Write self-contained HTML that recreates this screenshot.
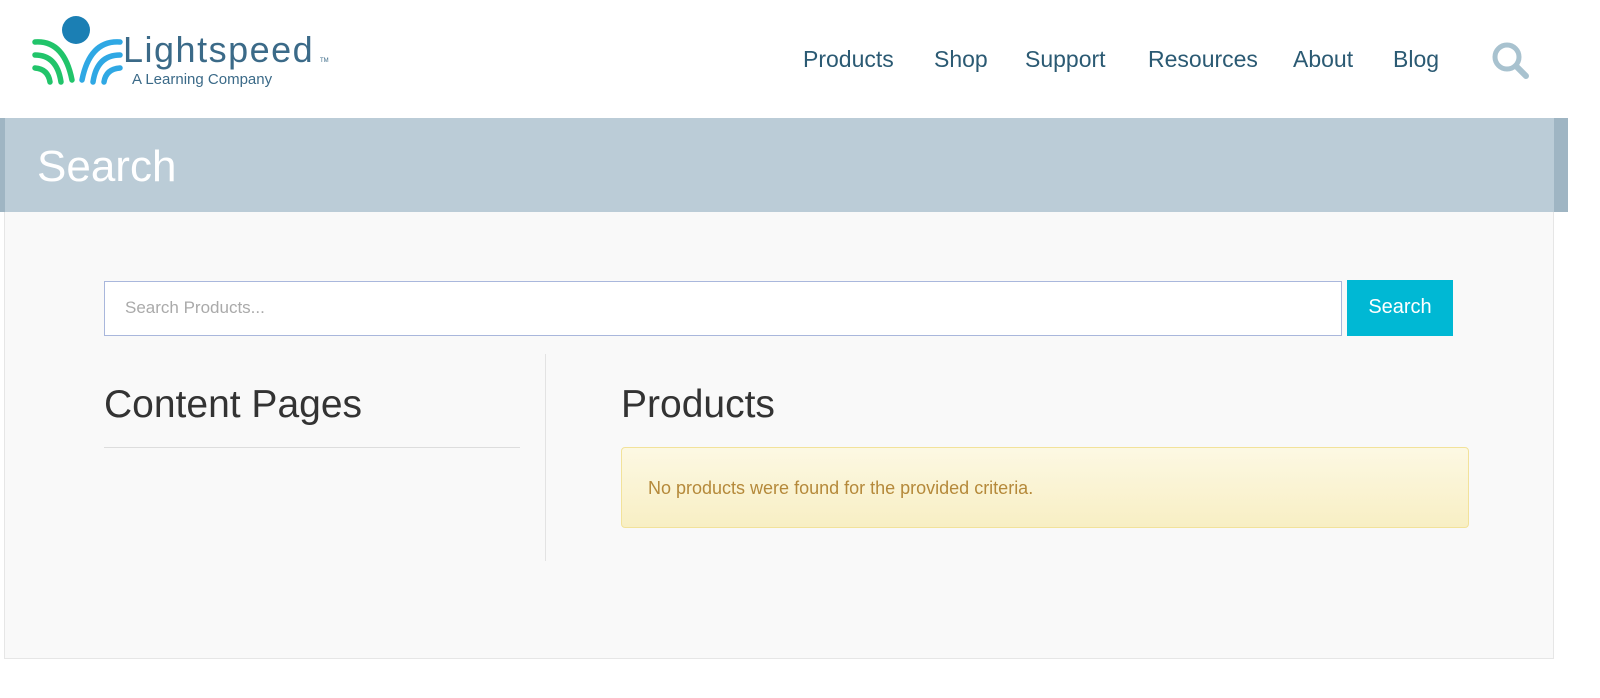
<!DOCTYPE html>
<html><head><meta charset="utf-8"><style>
*{margin:0;padding:0;box-sizing:border-box}
body{width:1600px;height:698px;background:#fff;font-family:"Liberation Sans",sans-serif;position:relative;overflow:hidden}
.a{position:absolute}
.nav{top:46px;font-size:23px;color:#2b5a73;white-space:nowrap}
</style></head><body>
<svg class="a" style="left:28px;top:12px" width="100" height="75" viewBox="0 0 100 75">
<circle cx="48" cy="18" r="14" fill="#1b7fb4"/>
<g fill="none" stroke-width="5.5" stroke-linecap="round">
<path d="M7 30 Q36 28 44 68" stroke="#21c46a"/>
<path d="M7 43 Q29 43 33 70" stroke="#21c46a"/>
<path d="M7 56 Q20 57 22 70" stroke="#21c46a"/>
<path d="M92 30 Q62 28 54 68" stroke="#2fa8e4"/>
<path d="M92 43 Q69 43 65 70" stroke="#2fa8e4"/>
<path d="M92 56 Q78 57 76 70" stroke="#2fa8e4"/>
</g></svg>
<div class="a" style="left:123px;top:29px;font-size:36px;color:#3b6a88;letter-spacing:1.5px">Lightspeed</div>
<div class="a" style="left:320px;top:58px;font-size:6px;color:#3b6a88">TM</div>
<div class="a" style="left:132px;top:71px;font-size:15px;color:#3b6a88">A Learning Company</div>
<div class="a nav" style="left:803px">Products</div>
<div class="a nav" style="left:934px">Shop</div>
<div class="a nav" style="left:1025px">Support</div>
<div class="a nav" style="left:1148px">Resources</div>
<div class="a nav" style="left:1293px">About</div>
<div class="a nav" style="left:1393px">Blog</div>
<svg class="a" style="left:1490px;top:40px" width="42" height="42" viewBox="0 0 42 42"><circle cx="17" cy="17" r="12" fill="none" stroke="#a8c2cf" stroke-width="5"/><path d="M26 26 L36 36" stroke="#a8c2cf" stroke-width="6" stroke-linecap="round"/></svg>
<div class="a" style="left:0;top:118px;width:1568px;height:94px;background:#bbccd7"></div>
<div class="a" style="left:0;top:118px;width:5px;height:94px;background:#9fb5c3"></div>
<div class="a" style="left:1554px;top:118px;width:14px;height:94px;background:#9fb5c3"></div>
<div class="a" style="left:37px;top:142px;font-size:44px;color:#fff;font-weight:300">Search</div>
<div class="a" style="left:4px;top:212px;width:1550px;height:447px;background:#f9f9f9;border:1px solid #e6e6e6;border-top:none"></div>
<div class="a" style="left:104px;top:281px;width:1238px;height:55px;background:#fff;border:1px solid #a9b7dc"></div>
<div class="a" style="left:125px;top:298px;font-size:17px;color:#aaa">Search Products...</div>
<div class="a" style="left:1347px;top:280px;width:106px;height:56px;background:#00b8d4;color:#fff;font-size:20px;text-align:center;line-height:55px">Search</div>
<div class="a" style="left:104px;top:383px;font-size:39px;color:#333;font-weight:300">Content Pages</div>
<div class="a" style="left:104px;top:447px;width:416px;height:1px;background:#ddd"></div>
<div class="a" style="left:545px;top:354px;width:1px;height:207px;background:#e3e3e3"></div>
<div class="a" style="left:621px;top:383px;font-size:39px;color:#333;font-weight:300">Products</div>
<div class="a" style="left:621px;top:447px;width:848px;height:81px;background:linear-gradient(#fcf8e3,#f8efc4);border:1px solid #f2e29a;border-radius:4px"></div>
<div class="a" style="left:648px;top:478px;font-size:18px;color:#b5893a">No products were found for the provided criteria.</div>
</body></html>
